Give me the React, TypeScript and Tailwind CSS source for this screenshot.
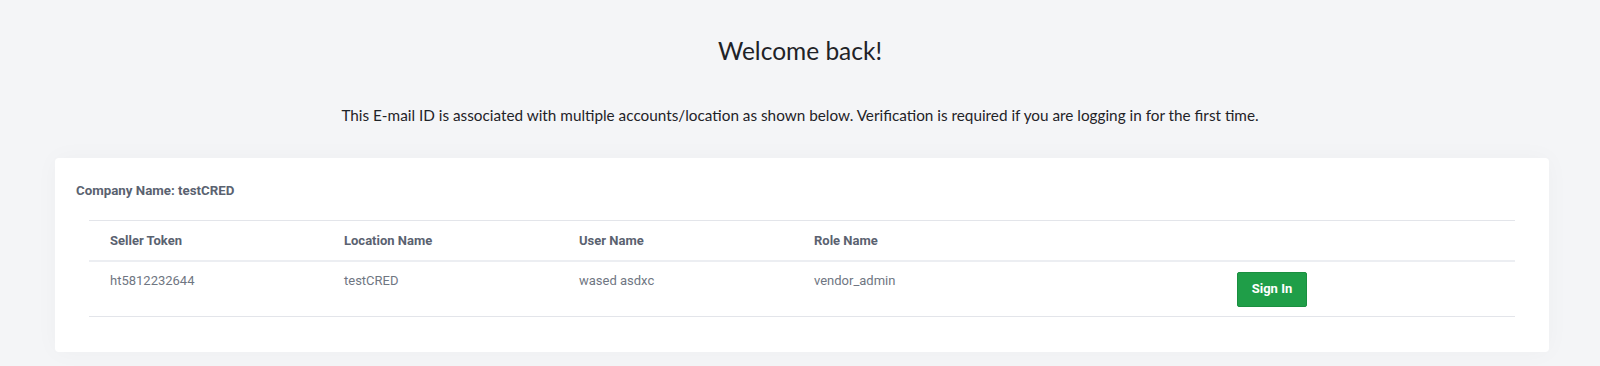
export default function App() {
  const rows = [
    { token: "ht5812232644", location: "testCRED", user: "wased asdxc", role: "vendor_admin" },
  ];

  return (
    <div className="min-h-[366px] bg-[#f4f5f7] pb-[15px]">
      <div className="pt-[34px] text-center text-[24.5px] leading-[34px] text-[#1f2328] [font-family:Lato,sans-serif]">
        Welcome back!
      </div>
      <p className="mt-[37px] text-center text-[15.3px] leading-[20px] text-[#1f2328] [font-family:Lato,sans-serif]">
        This E-mail ID is associated with multiple accounts/location as shown below. Verification is required if you are logging in for the first time.
      </p>

      <div className="pl-[55px] pr-[51px] mt-[33px]">
        <div className="rounded bg-white pt-[23px] pb-[35px] shadow-[0_0_24px_rgba(0,0,0,0.03)] [font-family:Roboto,sans-serif]">
          <div className="px-[21px] text-[13.3px] font-bold leading-[20px] text-[#5a6270]">
            Company Name: testCRED
          </div>
          <div className="mx-[34px] mt-[19px] border-t border-[#e3e5ea]">
            <div className="grid h-[41px] grid-cols-[234px_235px_235px_423px_1fr] items-center border-b-2 border-[#eceef2] text-[13px] font-bold text-[#5a6270]">
              <div className="pl-[21px]">Seller Token</div>
              <div className="pl-[21px]">Location Name</div>
              <div className="pl-[21px]">User Name</div>
              <div className="pl-[21px]">Role Name</div>
              <div />
            </div>
            {rows.map((r) => (
              <div
                key={r.token}
                className="grid h-[55px] grid-cols-[234px_235px_235px_423px_1fr] border-b border-[#e3e5ea] text-[13px] text-[#6f7682]"
              >
                <div className="pl-[21px] pt-[9px] leading-[20px]">{r.token}</div>
                <div className="pl-[21px] pt-[9px] leading-[20px]">{r.location}</div>
                <div className="pl-[21px] pt-[9px] leading-[20px]">{r.user}</div>
                <div className="pl-[21px] pt-[9px] leading-[20px]">{r.role}</div>
                <div className="flex items-center pl-[21px]">
                  <button className="h-[35px] w-[70px] rounded-[2px] border border-[#1a8f40] bg-[#1f9e48] text-[13px] font-bold text-white">
                    Sign In
                  </button>
                </div>
              </div>
            ))}
          </div>
        </div>
      </div>
    </div>
  );
}
